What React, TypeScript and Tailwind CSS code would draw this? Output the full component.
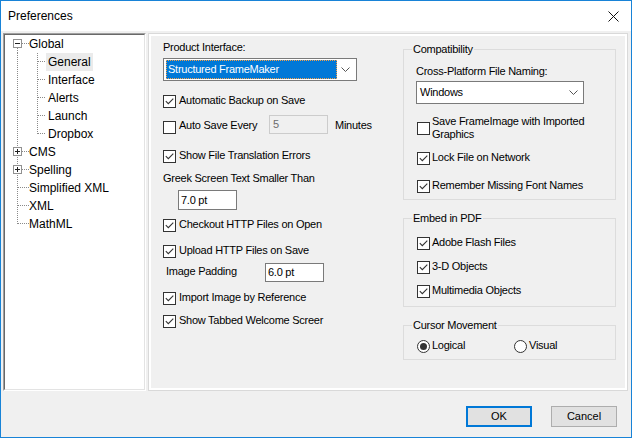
import React from 'react';

const Check = ({ checked }: { checked: boolean }) => (
  <span className="flex h-[13px] w-[13px] shrink-0 items-center justify-center border border-[#333] bg-white">
    {checked && (
      <svg width="11" height="11" viewBox="0 0 11 11">
        <path d="M1.8 5.2 L4.3 7.7 L9.3 2.6" fill="none" stroke="#333" strokeWidth="1.1" />
      </svg>
    )}
  </span>
);

const Radio = ({ checked }: { checked: boolean }) => (
  <span className="flex h-[13px] w-[13px] shrink-0 items-center justify-center rounded-full border border-[#333] bg-white">
    {checked && <span className="h-[7px] w-[7px] rounded-full bg-[#333]" />}
  </span>
);

const CheckRow = ({ label, checked, gap = 'gap-[3px]' }: { label: string; checked: boolean; gap?: string }) => (
  <div className={`flex items-start ${gap}`}>
    <Check checked={checked} />
    <span className="-mt-[1px] whitespace-nowrap leading-[13px]">{label}</span>
  </div>
);

const Chevron = () => (
  <svg width="9" height="5" viewBox="0 0 9 5">
    <path d="M0.5 0.5 L4.5 4.5 L8.5 0.5" fill="none" stroke="#555" strokeWidth="1" />
  </svg>
);

type Node = { label: string; level: number; box?: 'minus' | 'plus'; first?: boolean; last?: boolean; selected?: boolean };

const tree: Node[] = [
  { label: 'Global', level: 0, box: 'minus', first: true },
  { label: 'General', level: 1, selected: true },
  { label: 'Interface', level: 1 },
  { label: 'Alerts', level: 1 },
  { label: 'Launch', level: 1 },
  { label: 'Dropbox', level: 1, last: true },
  { label: 'CMS', level: 0, box: 'plus' },
  { label: 'Spelling', level: 0, box: 'plus' },
  { label: 'Simplified XML', level: 0 },
  { label: 'XML', level: 0 },
  { label: 'MathML', level: 0, last: true },
];

const TreeLines = ({ n }: { n: Node }) => {
  if (n.level === 0) {
    return (
      <svg width="24" height="18" className="shrink-0">
        <g stroke="#8a8a8a" strokeDasharray="1 1" strokeWidth="1">
          <line x1="12.5" y1={n.first ? 13 : 0} x2="12.5" y2={n.last ? 9 : 18} />
          <line x1={n.box ? 17 : 13} y1="8.5" x2="24" y2="8.5" />
        </g>
        {n.box && (
          <g>
            <rect x="8.5" y="4.5" width="8" height="8" fill="#fff" stroke="#919191" />
            <line x1="10" y1="8.5" x2="15" y2="8.5" stroke="#222" />
            {n.box === 'plus' && <line x1="12.5" y1="6" x2="12.5" y2="11" stroke="#222" />}
          </g>
        )}
      </svg>
    );
  }
  return (
    <svg width="41" height="18" className="shrink-0">
      <g stroke="#8a8a8a" strokeDasharray="1 1" strokeWidth="1">
        <line x1="12.5" y1="0" x2="12.5" y2="18" />
        <line x1="32.5" y1="0" x2="32.5" y2={n.last ? 9 : 18} />
        <line x1="33" y1="8.5" x2="41" y2="8.5" />
      </g>
    </svg>
  );
};

export default function App() {
  return (
    <div className="flex h-[438px] w-[632px] flex-col border border-[#1883d7] bg-[#f0f0f0] font-['Liberation_Sans',Arial,sans-serif] text-black">
      {/* Title bar */}
      <div className="flex h-[30px] shrink-0 items-center justify-between bg-white pl-[7px] pr-[12px]">
        <span className="text-[12px]">Preferences</span>
        <svg width="11" height="11" viewBox="0 0 11 11">
          <path d="M0.5 0.5 L10.5 10.5 M10.5 0.5 L0.5 10.5" stroke="#111" strokeWidth="1" />
        </svg>
      </div>

      {/* Body */}
      <div className="flex flex-1 flex-col pl-[2px] pr-[3px] pt-[2px]">
        <div className="flex h-[358px] gap-[2px]">
          {/* Tree */}
          <div className="w-[143px] border border-b-white border-l-[#a0a0a0] border-r-white border-t-[#a0a0a0]">
            <div className="h-full border border-b-[#e3e3e3] border-l-[#696969] border-r-[#e3e3e3] border-t-[#696969] bg-white text-[12px]">
              {tree.map((n) => (
                <div key={n.label} className="flex h-[18px] items-center">
                  <TreeLines n={n} />
                  <span className={`h-[18px] whitespace-nowrap leading-[18px] ${n.level === 1 ? 'px-[2px]' : ''} ${n.selected ? 'bg-[#ebebeb]' : ''}`}>
                    {n.label}
                  </span>
                </div>
              ))}
            </div>
          </div>

          {/* Right panel */}
          <div className="w-[480px] border border-[#d9d9d9]">
            <div className="flex h-full border-2 border-white bg-[#f0f0f0] pl-[12px] text-[11px] tracking-[-0.25px]">
              {/* Left column */}
              <div className="flex w-[240px] flex-col">
                <div className="mt-[4px] leading-[14px]">Product Interface:</div>
                <div className="mt-[4px] flex h-[23px] w-[194px] items-center border border-[#7a7a7a] bg-white pl-[2px] pr-[6px]">
                  <div className="flex h-[19px] w-[171px] items-center border border-dotted border-[#f5a14a] bg-[#0078d7] pl-[1px] text-[11px] text-white">
                    Structured FrameMaker
                  </div>
                  <div className="flex flex-1 justify-end">
                    <Chevron />
                  </div>
                </div>
                <div className="mt-[14px]">
                  <CheckRow label="Automatic Backup on Save" checked />
                </div>
                <div className="mt-[7px] flex h-[19px] items-center">
                  <div className="self-end">
                    <Check checked={false} />
                  </div>
                  <span className="ml-[3px] w-[90px] pt-[2px] leading-[13px]">Auto Save Every</span>
                  <div className="flex h-[19px] w-[59px] items-center border border-[#cccccc] bg-[#f0f0f0] pl-[3px] text-[#6d6d6d]">5</div>
                  <span className="ml-[7px] pt-[1px] leading-[13px]">Minutes</span>
                </div>
                <div className="mt-[16px]">
                  <CheckRow label="Show File Translation Errors" checked />
                </div>
                <div className="mt-[8px] leading-[14px]">Greek Screen Text Smaller Than</div>
                <div className="ml-[15px] mt-[5px] flex h-[20px] w-[59px] items-center border border-[#7a7a7a] bg-white pl-[2px]">7.0 pt</div>
                <div className="mt-[9px]">
                  <CheckRow label="Checkout HTTP Files on Open" checked />
                </div>
                <div className="mt-[13px]">
                  <CheckRow label="Upload HTTP Files on Save" checked />
                </div>
                <div className="mt-[5px] flex h-[19px] items-center">
                  <span className="ml-[3px] w-[99px] pb-[3px] leading-[13px]">Image Padding</span>
                  <div className="flex h-[19px] w-[59px] items-center border border-[#7a7a7a] bg-white pl-[2px]">6.0 pt</div>
                </div>
                <div className="mt-[10px]">
                  <CheckRow label="Import Image by Reference" checked />
                </div>
                <div className="mt-[10px]">
                  <CheckRow label="Show Tabbed Welcome Screer" checked />
                </div>
              </div>

              {/* Right column */}
              <div className="flex w-[213px] flex-col">
                <fieldset className="mt-[6px] border border-[#dcdcdc] px-[8px] pb-[6px] pt-[8px]">
                  <legend className="px-[1px] leading-[14px]">Compatibility</legend>
                  <div className="flex flex-col pl-[4px]">
                    <div className="leading-[14px]">Cross-Platform File Naming:</div>
                    <div className="mt-[3px] flex h-[23px] w-[168px] items-center justify-between border border-[#7a7a7a] bg-white pl-[3px] pr-[5px]">
                      <span>Windows</span>
                      <Chevron />
                    </div>
                    <div className="ml-[1px] mt-[11px] flex items-center gap-[2px]">
                      <Check checked={false} />
                      <span className="leading-[13px]">
                        Save FrameImage with Imported
                        <br />
                        Graphics
                      </span>
                    </div>
                    <div className="ml-[1px] mt-[11px]">
                      <CheckRow label="Lock File on Network" checked gap="gap-[2px]" />
                    </div>
                    <div className="ml-[1px] mt-[15px]">
                      <CheckRow label="Remember Missing Font Names" checked gap="gap-[2px]" />
                    </div>
                  </div>
                </fieldset>

                <fieldset className="mt-[11px] border border-[#dcdcdc] px-[8px] pb-[8px] pt-[12px]">
                  <legend className="px-[1px] leading-[14px]">Embed in PDF</legend>
                  <div className="flex flex-col pl-[5px]">
                    <CheckRow label="Adobe Flash Files" checked gap="gap-[2px]" />
                    <div className="mt-[11px]">
                      <CheckRow label="3-D Objects" checked gap="gap-[2px]" />
                    </div>
                    <div className="mt-[11px]">
                      <CheckRow label="Multimedia Objects" checked gap="gap-[2px]" />
                    </div>
                  </div>
                </fieldset>

                <fieldset className="mt-[11px] border border-[#dcdcdc] px-[8px] pb-[6px] pt-[8px]">
                  <legend className="px-[1px] leading-[14px]">Cursor Movement</legend>
                  <div className="flex pl-[5px]">
                    <div className="flex w-[97px] items-start gap-[2px]">
                      <Radio checked />
                      <span className="-mt-[1px] leading-[13px]">Logical</span>
                    </div>
                    <div className="flex items-start gap-[2px]">
                      <Radio checked={false} />
                      <span className="-mt-[1px] leading-[13px]">Visual</span>
                    </div>
                  </div>
                </fieldset>
              </div>
            </div>
          </div>
        </div>

        {/* Footer buttons */}
        <div className="mt-[15px] flex justify-end gap-[19px] pr-[11px] text-[11px]">
          <button className="flex h-[21px] w-[66px] items-center justify-center border-2 border-[#0078d7] bg-[#e1e1e1]">OK</button>
          <button className="flex h-[21px] w-[66px] items-center justify-center border border-[#adadad] bg-[#e1e1e1]">Cancel</button>
        </div>
      </div>
    </div>
  );
}
